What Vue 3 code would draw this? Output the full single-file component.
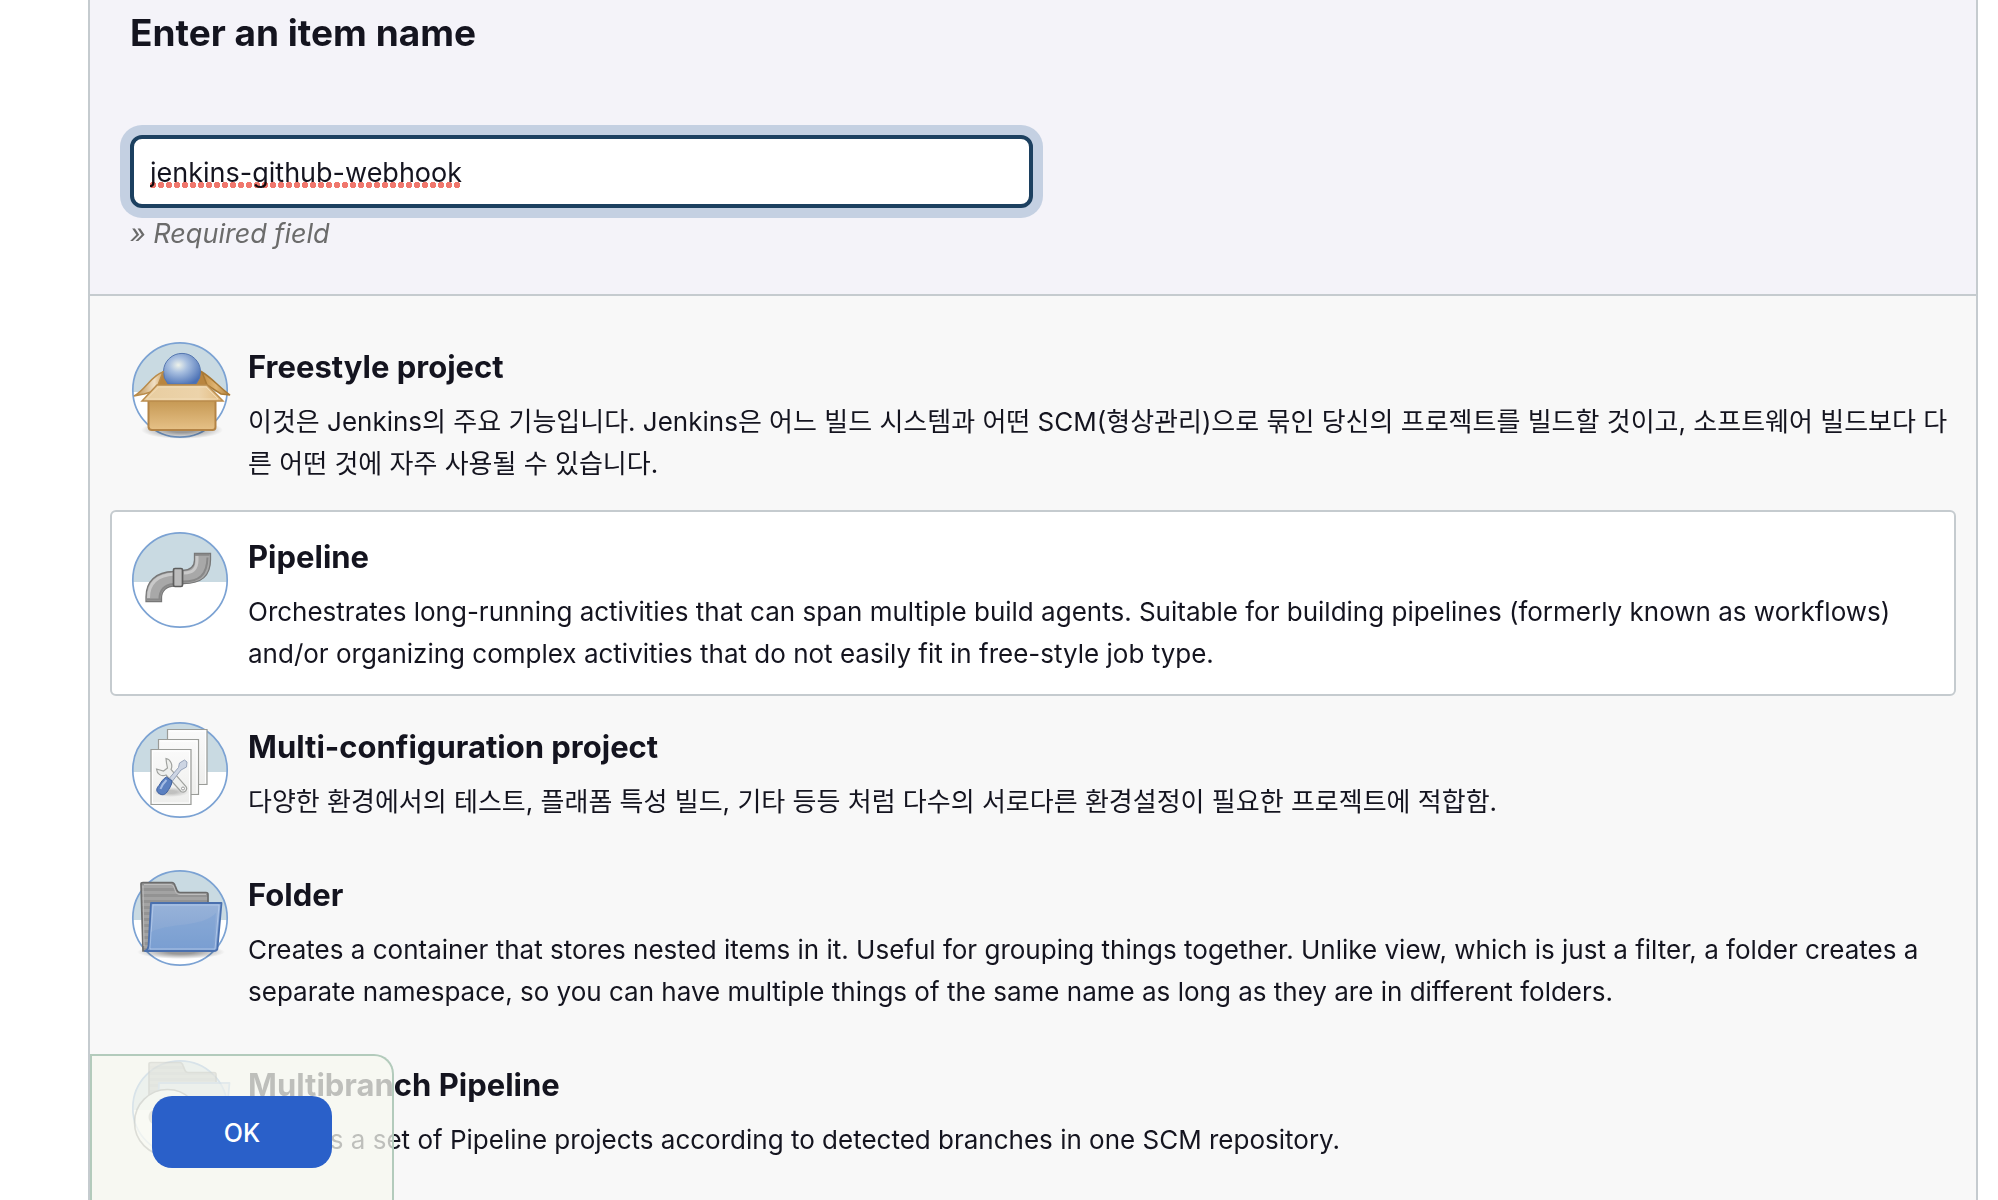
<template>
  <div class="page">
    <form class="panel" @submit.prevent>
      <div class="header">
        <h1><label for="name">Enter an item name</label></h1>
        <div class="name-field">
          <input
              id="name"
              v-model="name"
              type="text"
              autocomplete="off"
              spellcheck="false"
          />
          <span class="spelling" :style="{ width: `${name.length * 14 + 2}px` }"></span>
        </div>
        <p class="required">» Required field</p>
      </div>

      <ul class="items">
        <li v-for="item in items" :key="item.id">
          <label class="item" :class="{ active: selected === item.id }">
            <input v-model="selected" type="radio" name="mode" :value="item.id" />
            <svg class="icon" viewBox="0 0 96 96" aria-hidden="true">
              <circle cx="48" cy="48" r="47" fill="#fff" />
              <path d="M1 50v-2a47 47 0 0 1 94 0v2z" fill="#c9dae2" />
              <circle cx="48" cy="48" r="47.2" fill="none" stroke="#7ba2d3" stroke-width="1.7" />

              <g v-if="item.id === 'freestyle'">
                <ellipse cx="50" cy="88" rx="41" ry="9" fill="url(#shadow)" />
                <path d="M30 30h40l7 14H23z" fill="#b9853f" stroke="#a97730" />
                <path d="M36 42a18.500 18.500 0 1 1 28 0z" fill="url(#ball)" stroke="#5577b0" />
                <path d="M31 30C20 33 14 47 2 54l10-2 7-2 7-7z" fill="url(#flapLeft)" stroke="#b98b4a" stroke-width="1.500" />
                <path d="M70 30c10 6 18 16 28 23l-9-1-14-9z" fill="url(#flapRight)" stroke="#a87935" stroke-width="1.500" />
                <path d="M16.500 56h67v29q0 3-3 3H20q-3 0-3.500-3z" fill="url(#boxFront)" stroke="#b38345" stroke-width="2" />
                <path d="M25 43h50l16 16H10z" fill="url(#boxFlap)" stroke="#bb8c4c" stroke-width="1.500" />
                <path d="M26.500 45h47.500l12 12H14.500z" fill="none" stroke="#f6e3c0" stroke-opacity=".7" />
              </g>

              <g v-else-if="item.id === 'pipeline'">
                <path d="M14 69.500h15.500V66c0-7 5-12 13-12l9-2.500c18 0 27-7 27-24V21.500H62.500V28c0 7-4 10-12 10.500l-9 1C24 40 14 49 14 65z" fill="#a8a8a8" stroke="#777" stroke-width="1.300" />
                <path d="M16.500 66c0-15 9-23 26-24M52 41c9 0 13-4 13-13v-4" fill="none" stroke="#c9c9c9" stroke-width="3" />
                <path d="M27.500 67c0-9 5-14 14-15M51 49.500c16 0 24-6 24.500-24" fill="none" stroke="#888" stroke-width="2" />
                <path d="M14.500 67.500h14.500M63 22.800h14.500" stroke="#888" stroke-width="2" />
                <rect x="41.500" y="36.500" width="9" height="18" rx="1.500" fill="#bcbcbc" stroke="#5d5d5d" stroke-width="1.700" />
              </g>

              <g v-else-if="item.id === 'matrix'">
                <g fill="url(#paper)" stroke="#9a9c98" stroke-width="1.200">
                  <path d="M35.500 7.500h39.500v55H35.500z" />
                  <path d="M26.500 17.500h40v55h-40z" />
                  <path d="M19 27.500h40v55H19z" />
                </g>
                <path d="M20.500 29h37v52h-37zM28 19h37M65 19v52M37 9h36.500v52" fill="none" stroke="#fff" />
                <ellipse cx="39" cy="70" rx="18" ry="5" fill="url(#shadow)" opacity=".5" />
                <path d="M34 36.500c5 1 7 7 5 11l15 17c2 3-1 7-5 5L34 53c-5 2-9-1-9.500-6l7 2 4-3-1-5z" fill="#eeefed" stroke="#a0a29f" stroke-width="1.200" />
                <circle cx="51" cy="66.500" r="1.500" fill="#fff" stroke="#999" />
                <path d="M37.500 56l9-10.500 1-4.500 5-3 2.500 2-.500 5-5.500 3-8.500 11z" fill="#cdd5e3" stroke="#98a4ba" />
                <path d="M34.500 55l5.500 4c0 4-3 8-5 11-2 3-5 3.500-8 1.500s-3-5 0-8c2-3 4-7 7.500-8.500z" fill="#5b80c0" stroke="#3c5f9e" />
                <path d="M34.500 58c-3 3-5 6-6 9" fill="none" stroke="#a5bce4" stroke-width="2" />
              </g>

              <g v-else-if="item.id === 'folder'">
                <ellipse cx="49" cy="82" rx="44" ry="7" fill="url(#shadow)" />
                <path d="M9 14q0-1.500 2-1.500h29q2 0 3 3l2 5q1 2 3 2h26q2 0 2 2V50L13 81h-2z" fill="url(#stripes)" stroke="#6c6c6c" stroke-width="1.700" />
                <path d="M11 16l1 60M12 14.500h27q2 0 3 3l2 5q1 2 4 2h26" fill="none" stroke="#bdbdbd" />
                <path d="M19 33h70.500l-4 45q0 3-4 3H13q3-1 3.500-5z" fill="url(#folderFront)" stroke="#4a70ae" stroke-width="1.800" stroke-linejoin="round" />
                <path d="M21 35h66l-4 44H18z" fill="none" stroke="#b8ceee" stroke-opacity=".75" />
                <path d="M19 62c20-10 50-4 65-19l-3 35H18z" fill="#6f9ad3" opacity=".3" />
              </g>

              <g v-else opacity=".65">
                <path d="M17 4q0-1.500 2-1.500h29q2 0 3 3l2 5q1 2 3 2h26q2 0 2 2V40L20 72h-3z" fill="url(#stripes)" stroke="#6c6c6c" stroke-width="1.700" />
                <path d="M27 23h70.500l-4 45q0 3-4 3H21q3-1 3.500-5z" fill="#c9d3e0" stroke="#7ba2d3" stroke-width="1.800" stroke-linejoin="round" />
                <circle cx="35.500" cy="62.500" r="33" fill="#fff" stroke="#555" stroke-width="1.700" />
                <path d="M23 50v14h-2c-6-2-6-12 0-14z" fill="#888" />
              </g>
            </svg>
            <span class="text">
              <span class="title">{{ item.title }}</span>
              <span class="desc" :lang="item.lang">{{ item.desc }}</span>
            </span>
          </label>
        </li>
      </ul>

      <div class="footer">
        <button type="submit">OK</button>
      </div>
    </form>

    <!-- gradients shared by the icons -->
    <svg class="defs" aria-hidden="true">
      <defs>
        <radialGradient id="shadow">
          <stop offset=".3" stop-color="#000" stop-opacity=".4" />
          <stop offset="1" stop-color="#000" stop-opacity="0" />
        </radialGradient>
        <radialGradient id="ball" cx=".4" cy=".38" r=".7">
          <stop offset="0" stop-color="#eef2ea" />
          <stop offset=".35" stop-color="#a9c0e0" />
          <stop offset="1" stop-color="#4a70b5" />
        </radialGradient>
        <linearGradient id="flapLeft">
          <stop offset="0" stop-color="#b98b4a" />
          <stop offset=".7" stop-color="#f0dfc4" />
          <stop offset="1" stop-color="#d4aa6b" />
        </linearGradient>
        <linearGradient id="flapRight">
          <stop offset="0" stop-color="#c28d42" />
          <stop offset=".5" stop-color="#e0b675" />
          <stop offset="1" stop-color="#b07c35" />
        </linearGradient>
        <linearGradient id="boxFlap" x2="1" y2="0">
          <stop offset="0" stop-color="#e8cda0" />
          <stop offset=".7" stop-color="#ecd3aa" />
          <stop offset="1" stop-color="#e2bb80" />
        </linearGradient>
        <linearGradient id="boxFront" x2="0" y2="1">
          <stop offset="0" stop-color="#c3954f" />
          <stop offset="1" stop-color="#e6c187" />
        </linearGradient>
        <linearGradient id="paper" x2="0" y2="1">
          <stop offset="0" stop-color="#fafafa" />
          <stop offset="1" stop-color="#eeeeec" />
        </linearGradient>
        <linearGradient id="folderFront" x2="0" y2="1">
          <stop offset="0" stop-color="#98b3d9" />
          <stop offset="1" stop-color="#7d9fd0" />
        </linearGradient>
        <pattern id="stripes" width="6" height="6" patternUnits="userSpaceOnUse">
          <rect width="6" height="6" fill="#a3a3a3" />
          <rect width="6" height="3" fill="#939393" />
        </pattern>
      </defs>
    </svg>
  </div>
</template>

<script setup>
import { ref } from 'vue'

const name = ref('jenkins-github-webhook')
const selected = ref('pipeline')

const items = [
  {
    id: 'freestyle',
    title: 'Freestyle project',
    lang: 'ko',
    desc: '이것은 Jenkins의 주요 기능입니다. Jenkins은 어느 빌드 시스템과 어떤 SCM(형상관리)으로 묶인 당신의 프로젝트를 빌드할 것이고, 소프트웨어 빌드보다 다른 어떤 것에 자주 사용될 수 있습니다.',
  },
  {
    id: 'pipeline',
    title: 'Pipeline',
    lang: 'en',
    desc: 'Orchestrates long-running activities that can span multiple build agents. Suitable for building pipelines (formerly known as workflows) and/or organizing complex activities that do not easily fit in free-style job type.',
  },
  {
    id: 'matrix',
    title: 'Multi-configuration project',
    lang: 'ko',
    desc: '다양한 환경에서의 테스트, 플래폼 특성 빌드, 기타 등등 처럼 다수의 서로다른 환경설정이 필요한 프로젝트에 적합함.',
  },
  {
    id: 'folder',
    title: 'Folder',
    lang: 'en',
    desc: 'Creates a container that stores nested items in it. Useful for grouping things together. Unlike view, which is just a filter, a folder creates a separate namespace, so you can have multiple things of the same name as long as they are in different folders.',
  },
  {
    id: 'multibranch',
    title: 'Multibranch Pipeline',
    lang: 'en',
    desc: 'Creates a set of Pipeline projects according to detected branches in one SCM repository.',
  },
]
</script>

<style>
body {
  margin: 0;
  background: #fff;
}
</style>

<style scoped>
.page {
  height: 100vh;
  overflow: hidden;
  box-sizing: border-box;
  padding: 0 20px 0 88px;
  font-family: Inter, "Noto Sans CJK KR", sans-serif;
  font-size: 27px;
  line-height: 42px;
  color: #14141f;
}

.panel {
  position: relative;
  box-sizing: border-box;
  height: 100%;
  border: solid #c5cbcf;
  border-width: 0 2px;
  background: #f8f8f8;
}

.header {
  padding: 11px 40px 39px;
  background: #f4f3f9;
  border-bottom: 2px solid #c5cbcf;
}

h1 {
  margin: 0 0 80px;
  font-size: 37px;
  font-weight: 650;
  line-height: 44px;
}

.name-field {
  position: relative;
  width: 50%;
}

.name-field input {
  display: block;
  box-sizing: border-box;
  width: 100%;
  height: 73px;
  padding: 2px 16px 0;
  border: 4px solid #1c4060;
  border-radius: 12px;
  outline: none;
  box-shadow: 0 0 0 10px #c4d0e2;
  background: #fff;
  color: inherit;
  font: inherit;
}

/* dotted spelling mark laid over the input text */
.spelling {
  position: absolute;
  left: 20px;
  bottom: 20px;
  height: 6px;
  background: radial-gradient(circle at 3px 3px, #f0776d 3px, transparent 3px) 0 0 / 8px 6px;
  mix-blend-mode: multiply;
  pointer-events: none;
}

.required {
  margin: 5px 0 0;
  color: #6b6b6b;
  font-style: italic;
}

.items {
  margin: 0;
  padding: 24px 20px;
  list-style: none;
  display: flex;
  flex-direction: column;
  gap: 4px;
}

.item {
  display: flex;
  align-items: flex-start;
  gap: 20px;
  padding: 20px 4px 19px 20px;
  border: 2px solid transparent;
  border-radius: 6px;
  cursor: pointer;
}

.item.active {
  background: #fff;
  border-color: #c5cbcf;
}

.item input {
  position: absolute;
  opacity: 0;
  pointer-events: none;
}

.icon {
  flex: none;
  width: 96px;
  height: 96px;
  overflow: visible;
}

.text {
  flex: 1;
  min-width: 0;
  display: flex;
  flex-direction: column;
  gap: 9px;
}

.title {
  font-size: 31px;
  font-weight: 650;
  line-height: 50px;
}

.desc {
  font-size: 26px;
}

.footer {
  position: absolute;
  left: 0;
  bottom: 0;
  padding: 40px 60px 32px;
  border: 2px solid #b3cbbc;
  border-bottom: 0;
  border-radius: 0 20px 0 0;
  background: rgba(247, 248, 240, 0.75);
}

.footer button {
  display: block;
  width: 180px;
  height: 72px;
  padding: 2px 0 0;
  border: 0;
  border-radius: 20px;
  background: #2a60c9;
  color: #fff;
  font-family: inherit;
  font-size: 25px;
  font-weight: 500;
  cursor: pointer;
}

.defs {
  position: absolute;
  width: 0;
  height: 0;
}
</style>
